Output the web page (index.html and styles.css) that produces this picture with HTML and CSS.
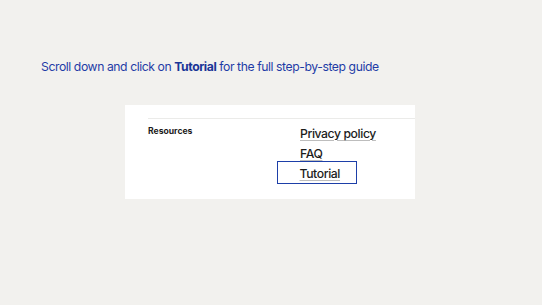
FILE: index.html
```html
<!DOCTYPE html>
<html>
<head>
<meta charset="utf-8">
<link rel="stylesheet" href="styles.css">
</head>
<body>
<main class="page">
  <p class="hint">Scroll down and click on <strong>Tutorial</strong> for the full step-by-step guide</p>
  <section class="card">
    <div class="rule"></div>
    <div class="row">
      <h3 class="label">Resources</h3>
      <ul class="links">
        <li><a class="link">Privacy policy</a></li>
        <li><a class="link">FAQ</a></li>
        <li class="focus"><a class="link">Tutorial</a></li>
      </ul>
    </div>
  </section>
</main>
</body>
</html>
```
FILE: styles.css
```css
html, body {
  margin: 0;
  padding: 0;
  background: #f2f1ee;
  font-family: Inter, "Liberation Sans", sans-serif;
}
.page {
  width: 542px;
  height: 305px;
  padding-top: 59px;
  box-sizing: border-box;
}
.hint {
  margin: 0 0 0 41px;
  font-size: 12.2px;
  line-height: 16px;
  color: #1f3ca6;
  letter-spacing: -0.42px;
}
.hint strong {
  font-weight: 700;
  color: #1a3597;
}
.card {
  margin: 30px 0 0 125px;
  width: 290px;
  height: 94px;
  background: #ffffff;
  padding-top: 13px;
  box-sizing: border-box;
}
.rule {
  margin-left: 23px;
  height: 1px;
  background: #ebebe9;
}
.row {
  display: flex;
  padding-left: 23px;
}
.label {
  margin: 6px 0 0 0;
  width: 152px;
  font-size: 8.6px;
  font-weight: 700;
  color: #1b1b1b;
  line-height: 12px;
}
.links {
  list-style: none;
  margin: 3px 0 0 0;
  padding: 0;
  display: flex;
  flex-direction: column;
}
.links li {
  height: 20px;
  line-height: 20px;
}
.link {
  font-size: 12.2px;
  font-weight: 500;
  letter-spacing: -0.4px;
  color: #1c1c1c;
  text-decoration: underline;
  text-decoration-color: #bdbdbd;
  text-underline-offset: 2px;
  text-decoration-thickness: 1px;
}
.links .focus {
  margin: -1px 0 0 -23px;
  padding-left: 21.5px;
  width: 56.5px;
  height: 21px;
  line-height: 20px;
  border: 1.5px solid #1d3fa8;
}
```
